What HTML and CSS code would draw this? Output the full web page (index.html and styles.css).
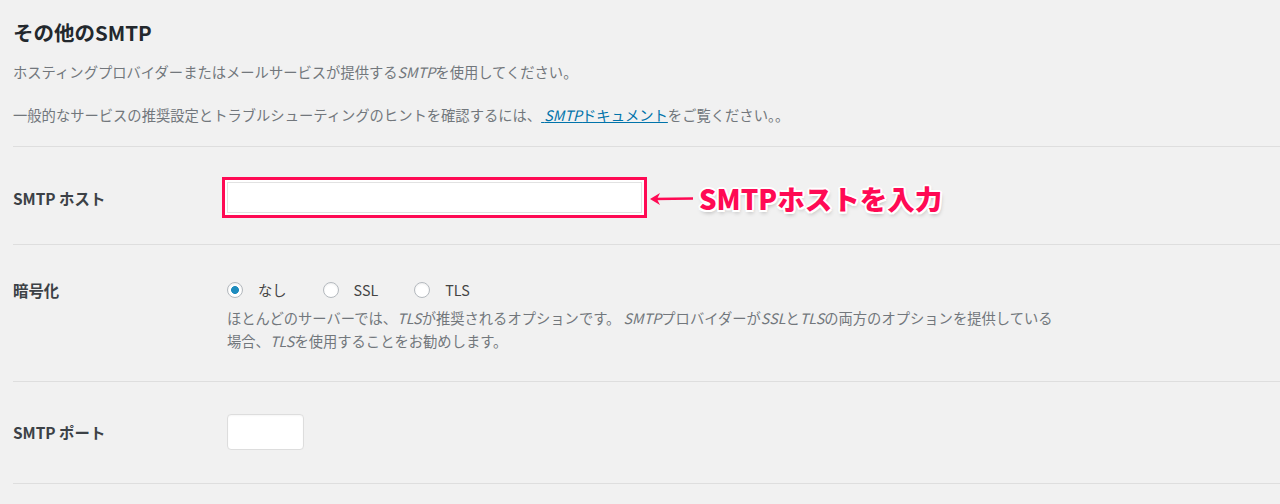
FILE: index.html
```html
<!DOCTYPE html>
<html lang="ja">
<head>
<meta charset="utf-8">
<title>その他のSMTP</title>
<link rel="stylesheet" href="styles.css">
</head>
<body>
<div class="wrap">
  <h2 class="title">その他のSMTP</h2>
  <p class="intro first">ホスティングプロバイダーまたはメールサービスが提供する<i>SMTP</i>を使用してください。</p>
  <p class="intro second">一般的なサービスの推奨設定とトラブルシューティングのヒントを確認するには、<a href="#" class="doc-link">&nbsp;<i>SMTP</i>ドキュメント</a>をご覧ください。。</p>

  <div class="form-table">
    <div class="row row-host">
      <div class="label">SMTP ホスト</div>
      <div class="field host-field">
        <input type="text" class="host-input">
        <div class="note">
          <svg class="arrow" width="44" height="16" viewBox="0 0 44 16" aria-hidden="true">
            <line x1="5" y1="8" x2="44" y2="7.5" stroke="#ff0a54" stroke-width="2.6"/>
            <path d="M1 8 L11 2 L8 8 L11 14 Z" fill="#ff0a54"/>
          </svg>
          <span class="note-text">SMTPホストを入力</span>
        </div>
      </div>
    </div>

    <div class="row row-enc">
      <div class="label">暗号化</div>
      <div class="field">
        <div class="radios">
          <label class="opt"><input type="radio" name="enc" checked><span>なし</span></label>
          <label class="opt"><input type="radio" name="enc"><span>SSL</span></label>
          <label class="opt"><input type="radio" name="enc"><span>TLS</span></label>
        </div>
        <p class="desc">ほとんどのサーバーでは、<i>TLS</i>が推奨されるオプションです。 <i>SMTP</i>プロバイダーが<i>SSL</i>と<i>TLS</i>の両方のオプションを提供している<br>場合、<i>TLS</i>を使用することをお勧めします。</p>
      </div>
    </div>

    <div class="row row-port">
      <div class="label">SMTP ポート</div>
      <div class="field">
        <input type="text" class="port-input">
      </div>
    </div>
  </div>
</div>
</body>
</html>
```

FILE: styles.css
```css
html, body {
  margin: 0;
  padding: 0;
  background: #f1f1f1;
}

body {
  font-family: "Noto Sans CJK JP", "Noto Sans", sans-serif;
  font-size: 14.3px;
  color: #444;
}

.wrap {
  padding: 20px 0 0 13px;
}

.title {
  margin: 0;
  font-size: 20.5px;
  line-height: 24px;
  font-weight: 700;
  color: #23282d;
}

.intro {
  margin: 0;
  line-height: 23px;
  color: #72777c;
}

.intro.first {
  margin-top: 16px;
}

.intro.second {
  margin-top: 20px;
}

.intro i,
.desc i {
  font-style: italic;
}

.doc-link {
  color: #0073aa;
  text-decoration: underline;
}

.form-table {
  margin-top: 20px;
  border-top: 1px solid #dedede;
}

.row {
  display: grid;
  grid-template-columns: 214px 1fr;
  border-bottom: 1px solid #dedede;
}

.label {
  font-size: 15.4px;
  font-weight: 700;
  color: #3c4146;
  line-height: 20px;
}

.row-host {
  align-items: center;
  padding: 35px 0 31px;
}

.row-enc {
  padding: 35px 0 29px;
}

.row-port {
  align-items: center;
  padding: 32px 0 33px;
}

.host-field {
  display: flex;
  align-items: center;
}

.host-input {
  box-sizing: border-box;
  width: 415px;
  height: 31px;
  margin: 0;
  border: 1px solid #e2e2e2;
  background: #fff;
  outline: none;
  box-shadow: 0 0 0 2px #fff, 0 0 0 5px #ff0a54;
}

.note {
  display: flex;
  align-items: center;
  margin-left: 7px;
}

.arrow {
  display: block;
  margin-top: 2px;
}

.note-text {
  margin-left: 6px;
  font-size: 27.5px;
  font-weight: 900;
  line-height: 30px;
  color: #ff0a54;
  text-shadow:
    2px 0 0 #fff, -2px 0 0 #fff, 0 2px 0 #fff, 0 -2px 0 #fff,
    1.5px 1.5px 0 #fff, -1.5px 1.5px 0 #fff, 1.5px -1.5px 0 #fff, -1.5px -1.5px 0 #fff,
    1px 3px 4px rgba(0, 0, 0, 0.25);
}

.radios {
  display: flex;
  align-items: center;
  height: 20px;
}

.opt {
  display: flex;
  align-items: center;
  gap: 15px;
  margin-right: 36px;
  color: #444;
  line-height: 20px;
}

.opt input {
  -webkit-appearance: none;
  appearance: none;
  box-sizing: border-box;
  width: 16px;
  height: 16px;
  margin: 0;
  border: 1px solid #b4b9be;
  border-radius: 50%;
  background: #fff;
  box-shadow: inset 0 1px 2px rgba(0, 0, 0, 0.07);
}

.opt input:checked {
  background: radial-gradient(circle, #1e8cbe 0 3.6px, #fff 4.3px);
}

.desc {
  margin: 6px 0 0;
  line-height: 23px;
  color: #72777c;
}

.port-input {
  box-sizing: border-box;
  width: 77px;
  height: 36px;
  margin: 0;
  border: 1px solid #dddddd;
  border-radius: 4px;
  background: #fff;
  box-shadow: inset 0 1px 2px rgba(0, 0, 0, 0.04);
  outline: none;
}
```
